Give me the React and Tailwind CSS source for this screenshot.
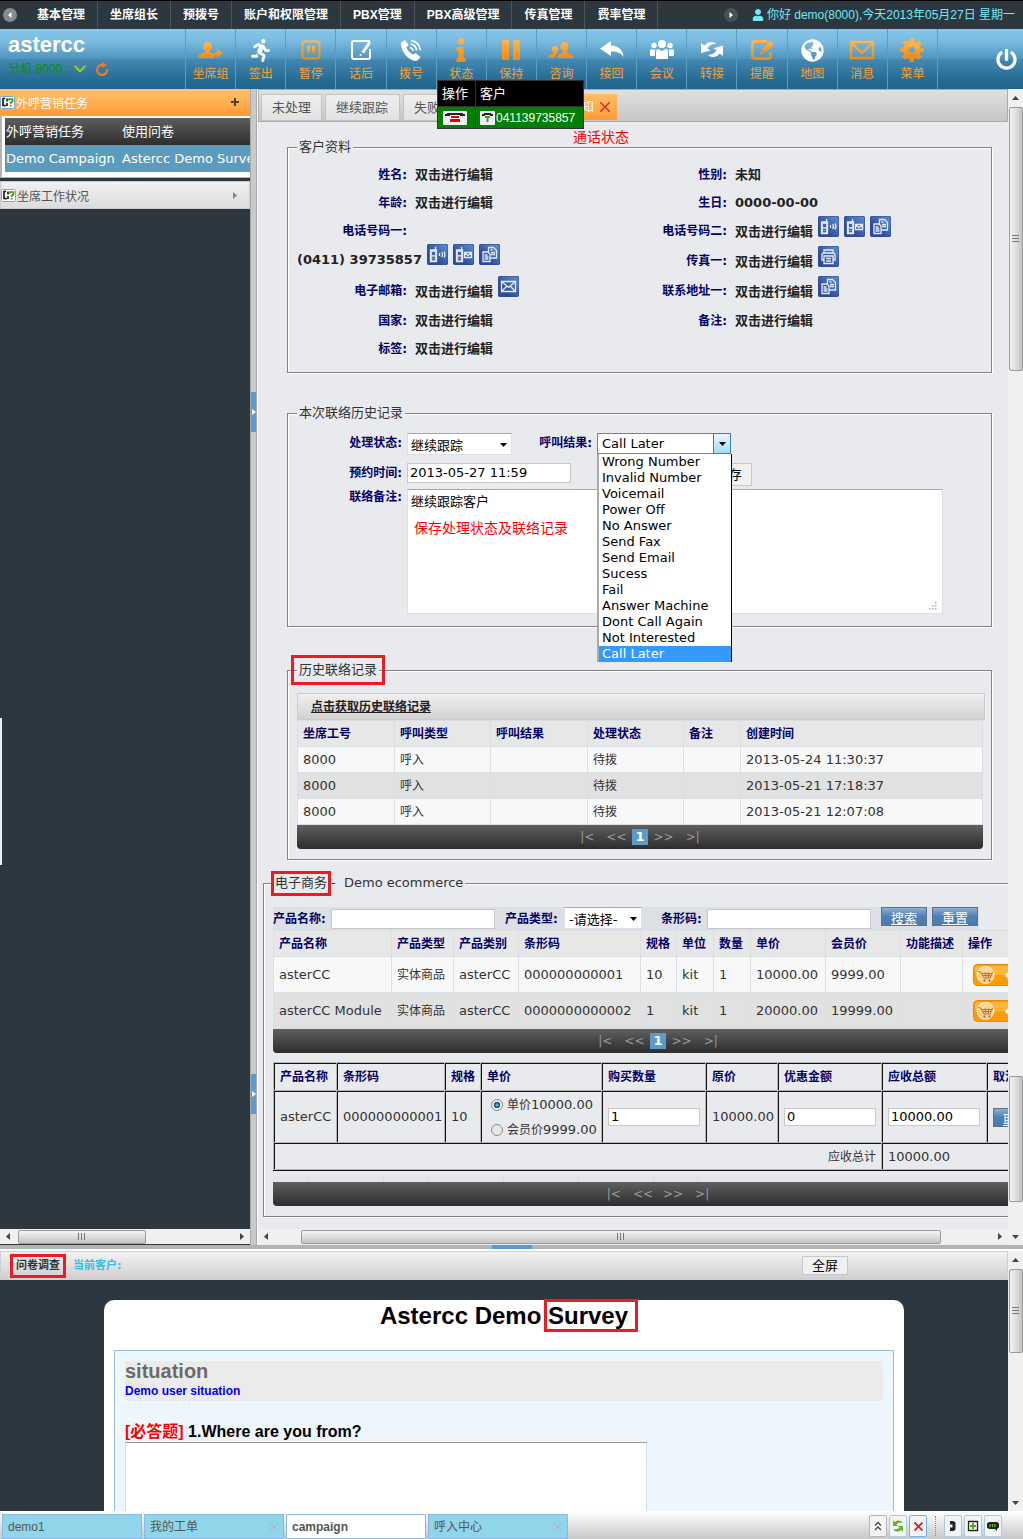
import { clsx } from 'clsx';
import { FaRunning, FaInfo, FaGlobeAmericas, FaUser, FaPowerOff, FaChevronDown } from 'react-icons/fa';

const NAV_ITEMS = ['基本管理', '坐席组长', '预拨号', '账户和权限管理', 'PBX管理', 'PBX高级管理', '传真管理', '费率管理'];

const ORANGE = 'fill-[url(#toolOrange)] stroke-none';

const AgentGroupIcon = () => (
  <svg width="26" height="22" viewBox="0 0 26 22" className={ORANGE}>
    <path d="M9.500 3c2.800 0 4.300 2 4.300 4.600 0 2-.9 3.800-2 4.600v1.300l3.200 1.200h2v-1.500h2V9.800l6 4.500-6 4.600v-2.700h-2V19H.5c0-3 .5-3.800 2.500-4.400l4.200-1.400V12c-1.200-.8-2-2.500-2-4.500C5.200 5 6.700 3 9.500 3z" />
    <path d="M16 12.800v-.8h1v.8zM16 16.500h3" fill="none" />
  </svg>
);

const PauseSquareIcon = () => (
  <svg width="20" height="20" viewBox="0 0 20 20">
    <rect x="1.500" y="1.500" width="17" height="17" rx="2" fill="none" stroke="url(#toolOrange)" strokeWidth="2" />
    <path d="M6 6h3v7.500H6zM11 6h3v7.500h-3z" className={ORANGE} />
  </svg>
);

const AfterCallIcon = () => (
  <svg width="20" height="20" viewBox="0 0 20 20" fill="none" stroke="#fff" strokeWidth="2">
    <path d="M19 9v8a2 2 0 0 1-2 2H3a2 2 0 0 1-2-2V3a2 2 0 0 1 2-2h16" />
    <path d="M17.500 1.500L20 3l-7 10.500-2.500-1.700zM9 13.500l2.200 1.400-2.700 1.300z" fill="#fff" stroke="none" />
  </svg>
);

const PhoneWavesIcon = () => (
  <svg width="24" height="24" viewBox="0 0 24 24" fill="none" stroke="#fff">
    <path
      d="M2 4.500L6 2l3.500 5-2.200 2.300c1.500 3.500 3.500 5.800 6.700 7.500l2.500-1.800 5 4-3 3.500c-2 1-6 0-10-3.500S1.500 9 2 4.500z"
      fill="#fff"
      stroke="none"
    />
    <path d="M11 9.500c1.500.3 2.800 1.500 3 3.300M11.500 6c3.500.5 5.800 3 6 6.500M12 2.500c5 .5 9 4.500 9.300 9.800" strokeWidth="1.600" />
  </svg>
);

const HoldIcon = () => (
  <svg width="20" height="20" viewBox="0 0 20 20" className={ORANGE}>
    <path d="M1 0h7v20H1zM12 0h7v20h-7z" />
  </svg>
);

const ConsultIcon = () => (
  <svg width="26" height="22" viewBox="0 0 26 22" className={ORANGE}>
    <path d="M16.500 3c2.700 0 4 2 4 4.600 0 2-.8 3.700-1.900 4.500v1.200l4.200 1.600c1.800.7 2.400 1.600 2.400 4.100H9.500c0-2.500.6-3.400 2.400-4.100l3-1.300v-1.500c-1.500-.9-2.400-2.500-2.400-4.500 0-2.600 1.400-4.600 4-4.600z" />
    <path d="M7 7c2 0 3.200 1.500 3.200 3.500 0 1.500-.6 2.700-1.400 3.300v.8c-1.300.8-1.800 2-1.800 4.400H.5c0-2 .4-2.800 1.800-3.300l2.900-1.100v-.8c-.9-.6-1.400-1.800-1.400-3.300C3.800 8.500 5 7 7 7z" />
  </svg>
);

const ReplyIcon = () => (
  <svg width="24" height="20" viewBox="0 0 24 20" fill="#fff">
    <path d="M0 8.500L11 1v4.500c7 0 12 4 12.500 11.500-2.500-4-6-5.500-12.500-5.500V16z" />
  </svg>
);

const ConferenceIcon = () => (
  <svg width="26" height="20" viewBox="0 0 26 20" fill="#fff">
    <circle cx="13" cy="4" r="4" />
    <circle cx="5" cy="5.500" r="2.700" />
    <circle cx="21" cy="5.500" r="2.700" />
    <path d="M7 19v-6.500C7 10 8 9 9.500 9l3.500 2 3.500-2c1.500 0 2.500 1 2.500 3.500V19zM6 16H1v-4.500C1 10 1.700 9 3 9l2 1 1.800-.7C6 10.500 6 12 6 13zM20 16h5v-4.500C25 10 24.300 9 23 9l-2 1-1.800-.7c.8 1.200.8 2.700.8 3.700z" />
  </svg>
);

const TransferIcon = () => (
  <svg width="24" height="20" viewBox="0 0 24 20" fill="#fff">
    <path d="M1 3l0 10 9.500-2.500-3-2C9 5.500 12 4 16 3.800 14 1 8 1 4.300 5.500z" />
    <path d="M23 16V5.500L13.500 8.300l3 2c-1.500 3-4.500 4.200-8.500 4.700 3 3 9 2.500 11.700-1.500z" />
  </svg>
);

const RemindIcon = () => (
  <svg width="25" height="22" viewBox="0 0 25 22">
    <path
      d="M16.500 2.500H4.500a2 2 0 0 0-2 2v13a2 2 0 0 0 2 2h14a2 2 0 0 0 2-2V13"
      fill="none"
      stroke="url(#toolOrange)"
      strokeWidth="2.800"
    />
    <path d="M20 1.500L24 5 15.500 13.500 12 10zM11 11l3.500 3.500L9.500 16z" className={ORANGE} />
  </svg>
);

const MessageIcon = () => (
  <svg width="26" height="20" viewBox="0 0 26 20" fill="none" stroke="url(#toolOrange)" strokeWidth="2.400">
    <path d="M2 2h22v16H2zM2.500 3L13 13 23.500 3" />
  </svg>
);

const MenuIcon = () => (
  <svg width="24" height="24" viewBox="0 0 24 24">
    <circle cx="12" cy="12" r="6" fill="none" stroke="url(#toolOrange)" strokeWidth="6" />
    <circle
      cx="12"
      cy="12"
      r="10"
      fill="none"
      stroke="url(#toolOrange)"
      strokeWidth="3.500"
      strokeDasharray="4.400 3.450"
      strokeDashoffset="2.200"
    />
  </svg>
);

const TOOLS = [
  { label: '坐席组', icon: <AgentGroupIcon /> },
  { label: '签出', icon: <FaRunning size={23} /> },
  { label: '暂停', icon: <PauseSquareIcon /> },
  { label: '话后', icon: <AfterCallIcon /> },
  { label: '拨号', icon: <PhoneWavesIcon /> },
  { label: '状态', icon: <FaInfo size={24} className={ORANGE} /> },
  { label: '保持', icon: <HoldIcon /> },
  { label: '咨询', icon: <ConsultIcon /> },
  { label: '接回', icon: <ReplyIcon /> },
  { label: '会议', icon: <ConferenceIcon /> },
  { label: '转接', icon: <TransferIcon /> },
  { label: '提醒', icon: <RemindIcon /> },
  { label: '地图', icon: <FaGlobeAmericas size={23} /> },
  { label: '消息', icon: <MessageIcon /> },
  { label: '菜单', icon: <MenuIcon /> },
];

const CALL_RESULTS = [
  'Wrong Number',
  'Invalid Number',
  'Voicemail',
  'Power Off',
  'No Answer',
  'Send Fax',
  'Send Email',
  'Sucess',
  'Fail',
  'Answer Machine',
  'Dont Call Again',
  'Not Interested',
  'Call Later',
];

function TopNav() {
  return (
    <nav className="flex h-[29px] shrink-0 items-stretch border-t border-black bg-[#2c3740] font-['Liberation_Sans','Noto_Sans_CJK_SC',sans-serif] text-[12px] leading-5 text-white">
      <div className="flex w-[25px] items-center pl-[3px]">
        <RoundArrow flip />
      </div>
      {NAV_ITEMS.map((item) => (
        <a key={item} href="#" className="flex items-center border-r border-[#4a555d] px-3 font-bold whitespace-nowrap">
          {item}
        </a>
      ))}
      <div className="ml-auto flex items-center pr-2">
        <RoundArrow />
        <span className="ml-[14px] flex items-center gap-[3px] whitespace-nowrap text-[#6feaf5]">
          <FaUser size={12} />
          你好 demo(8000),今天2013年05月27日 星期一
        </span>
      </div>
    </nav>
  );
}

function RoundArrow({ flip }) {
  return (
    <button type="button" aria-label={flip ? '向左' : '向右'}>
      <svg width="14" height="14" viewBox="0 0 14 14" className={clsx(flip && 'rotate-180')}>
        <circle cx="7" cy="7" r="7" fill={flip ? '#858b8f' : '#475159'} />
        <path d="M5.500 4v6l3.500-3z" fill="#fff" />
      </svg>
    </button>
  );
}

function Header() {
  return (
    <header className="relative flex h-[60px] shrink-0 bg-[linear-gradient(#85c7ec_0%,#7bbbe0_20%,#4e94bd_50%,#4488b1_51%,#22678f_90%,#20648c_100%)]">
      <svg width="0" height="0" className="absolute">
        <linearGradient id="toolOrange" x1="0" y1="0" x2="0" y2="1">
          <stop offset="0" stopColor="#ffb551" />
          <stop offset="1" stopColor="#f68a0a" />
        </linearGradient>
      </svg>
      <div className="w-[185px] pt-1 pl-2 font-['Liberation_Sans','Noto_Sans_CJK_SC',sans-serif]">
        <h1 className="text-[22px] leading-6 font-bold text-white">astercc</h1>
        <div className="flex items-center text-[12px] leading-6 text-[#0a8f0a]">
          分机 8000 :
          <FaChevronDown size={14} className="ml-1 text-[#9acb17]" />
          <button type="button" aria-label="刷新" className="ml-2">
            <svg width="14" height="14" viewBox="0 0 14 14" fill="none" stroke="#ef7d16" strokeWidth="2.200">
              <path d="M8 3a5 5 0 1 0 4 4" />
              <path d="M7 0l5 3-5 3z" fill="#ef7d16" stroke="none" />
            </svg>
          </button>
        </div>
      </div>
      <div className="grid w-[753px] grid-cols-15 border-l border-[#5c9fc6]">
        {TOOLS.map((tool) => (
          <button
            key={tool.label}
            type="button"
            className="flex flex-col items-center border-r border-[#5c9fc6] pt-2 text-white"
          >
            <span className="flex h-[26px] items-center justify-center">{tool.icon}</span>
            <span className="text-[12px] leading-[22px] whitespace-nowrap text-[#f7a032]">{tool.label}</span>
          </button>
        ))}
      </div>
      <button type="button" aria-label="退出" className="ml-auto pr-[6px] text-white">
        <FaPowerOff size={21} />
      </button>
      <CallPopup />
    </header>
  );
}

function CallPopup() {
  return (
    <table className="absolute top-[51px] left-[437px] z-20 w-[147px] border-collapse text-[13px] leading-5 text-white">
      <thead>
        <tr className="h-[26px] bg-black text-left">
          <th className="w-[38px] border border-[#333] pl-1 font-normal whitespace-nowrap">操作</th>
          <th className="border border-[#333] pl-1 font-normal">客户</th>
        </tr>
      </thead>
      <tbody>
        <tr className="h-[22px] bg-[#008000]">
          <td className="border border-[#333] pl-[5px]">
            <button type="button" aria-label="挂断" className="block">
              <svg width="24" height="14" viewBox="0 0 24 14">
                <rect width="24" height="14" rx="1" fill="#f0f0f6" />
                <path d="M4 2h16v1h2v2h-5V4H7v1H2V3h2z" fill="#222" />
                <path d="M8 5h8v2h1v4H7V7h1z" fill="#e00" />
                <path d="M7 7.500h10" stroke="#fff" />
              </svg>
            </button>
          </td>
          <td className="border border-[#333] pl-1">
            <span className="flex items-center gap-px font-['Liberation_Sans',sans-serif] text-[12px]">
              <svg width="15" height="14" viewBox="0 0 15 14">
                <rect width="15" height="14" rx="1" fill="#f0f0f6" />
                <path d="M4 2h7v1h2v2h-3V4H5v1H2V3h2z" fill="#222" />
                <path d="M5 5h5v2H8.500v4h-2V7H5z" fill="#4a9c1c" />
              </svg>
              041139735857
            </span>
          </td>
        </tr>
      </tbody>
    </table>
  );
}

function Arrow({ dir }) {
  const paths = { up: 'M1 6l3.500-4L8 6z', down: 'M1 3l3.500 4L8 3z', left: 'M6 1L2 4.500 6 8z', right: 'M3 1l4 3.500L3 8z' };
  return (
    <svg width="9" height="9" viewBox="0 0 9 9" fill="#444">
      <path d={paths[dir]} />
    </svg>
  );
}

function VScroll({ thumbs }) {
  return (
    <div className="flex w-[15px] shrink-0 flex-col items-center bg-[#f0f0f0]">
      <span className="flex h-[18px] items-center">
        <Arrow dir="up" />
      </span>
      {thumbs.map((t) => (
        <div
          key={t.className}
          className={clsx(
            'flex w-[14px] items-center justify-center rounded-xs border border-[#9a9a9a] bg-linear-to-r from-[#f4f4f4] via-[#dedee0] to-[#c2c2c6]',
            t.className,
          )}
        >
          {t.grip && <span className="h-[9px] w-[7px] bg-[repeating-linear-gradient(#777_0_1px,transparent_1px_3px)]" />}
        </div>
      ))}
      <span className="mt-auto flex h-[17px] items-center">
        <Arrow dir="down" />
      </span>
    </div>
  );
}

function HScroll({ thumb, className }) {
  return (
    <div className={clsx('flex h-[15px] shrink-0 items-center bg-[#f0f0f0]', className)}>
      <span className="w-[18px] pl-1">
        <Arrow dir="left" />
      </span>
      <div
        className={clsx(
          'flex h-[14px] items-center justify-center rounded-xs border border-[#9a9a9a] bg-linear-to-b from-[#f4f4f4] via-[#dcdcdc] to-[#c4c4c4]',
          thumb,
        )}
      >
        <span className="h-[7px] w-[9px] bg-[repeating-linear-gradient(90deg,#777_0_1px,transparent_1px_3px)]" />
      </div>
      <span className="mr-1 ml-auto">
        <Arrow dir="right" />
      </span>
    </div>
  );
}

function PanelIcon() {
  return (
    <svg width="15" height="13" viewBox="0 0 15 13" className="shrink-0">
      <rect x="0.500" y="0.500" width="14" height="12" rx="1" fill="#fff" stroke="#7ba7d6" />
      <path d="M5 2.500H3v7h2v1M7 2.500v3M7 7v3" fill="none" stroke="#111" strokeWidth="1.600" />
      <path d="M9 4.500V3h3.500v2.500l-1.800 1.300V8M10.700 9v1.500" fill="none" stroke="#3a9a12" strokeWidth="1.700" />
    </svg>
  );
}

function Sidebar() {
  return (
    <aside className="flex w-[250px] shrink-0 flex-col overflow-hidden bg-[#2c3740]">
      <div className="flex h-[26px] shrink-0 items-center bg-linear-to-b from-[#ffc26c] to-[#ff9c33] text-[12px] text-white">
        <PanelIcon />
        <span className="pt-1 pl-px">外呼营销任务</span>
        <button type="button" aria-label="展开" className="mr-[10px] ml-auto text-[#444]">
          <svg width="10" height="10" viewBox="0 0 10 10" stroke="currentColor" strokeWidth="2">
            <path d="M5 1v8M1 5h8" />
          </svg>
        </button>
      </div>
      <div className="border-y border-l-2 border-[#b4b4b4] bg-white pt-[2px] pb-[5px] pl-[3px]">
        <table className="w-[300px] table-fixed text-[13px] leading-5">
          <thead>
            <tr className="h-[27px] bg-linear-to-b from-[#5e5e5e] to-[#2e2e2e] text-left text-white">
              <th className="w-[116px] pl-px font-normal">外呼营销任务</th>
              <th className="pl-px font-normal">使用问卷</th>
            </tr>
          </thead>
          <tbody>
            <tr className="h-[27px] bg-[#5b9bbd] text-white">
              <td className="pl-px whitespace-nowrap">Demo Campaign</td>
              <td className="pl-px whitespace-nowrap">Astercc Demo Survey</td>
            </tr>
          </tbody>
        </table>
      </div>
      <div className="mt-[3px] flex h-7 shrink-0 items-center border border-[#ccc] bg-linear-to-b from-[#f0f0f0] to-[#dcdcdc] text-[12px] text-[#555]">
        <PanelIcon />
        <span className="pt-1 pl-px">坐席工作状况</span>
        <span className="mr-[10px] ml-auto opacity-60">
          <Arrow dir="right" />
        </span>
      </div>
      <div className="mt-[509px] h-[147px] w-[2px] bg-[#eceef0]" />
      <HScroll thumb="w-[128px]" className="mt-auto mb-px" />
    </aside>
  );
}

function Splitter() {
  return (
    <div className="flex w-[7px] shrink-0 flex-col items-center border-x border-[#a8a8a8] bg-[#c9c9c9]">
      {['mt-[303px]', 'mt-[642px]'].map((m) => (
        <button
          key={m}
          type="button"
          aria-label="收起"
          className={clsx('flex h-10 w-[5px] shrink-0 items-center justify-center bg-[#5b9bd5]', m)}
        >
          <svg width="4" height="6" viewBox="0 0 4 6" fill="#fff">
            <path d="M0 0l4 3-4 3z" />
          </svg>
        </button>
      ))}
    </div>
  );
}

const BOX = 'min-w-0 border border-[#848484] pl-[9px] shadow-[inset_1px_1px_0_#fff,1px_1px_0_#fff]';
const LEGEND = 'bg-[#e9eaee] px-[2px] text-[13px] leading-5 text-[#333]';
const LABEL = 'text-[12px] font-bold text-[#000066] whitespace-nowrap';
const INPUT = 'border border-[#c8c8c8] bg-white px-[2px] text-[13px] text-black';

function ActionIcon({ kind }) {
  const names = { call: '拨打', sms: '短信', copy: '复制', fax: '传真', mail: '邮件' };
  const phone = (
    <>
      <path d="M3.500 6h6v11.500h-6z" fill="#c9d5ec" />
      <path d="M8.500 3v3" />
      <path d="M5 8h3v3H5z" fill="#3c5eae" stroke="none" />
      <path d="M5 13.500h3M5 15.500h3" stroke="#3c5eae" />
    </>
  );
  return (
    <button type="button" aria-label={names[kind]} className="shrink-0 self-start">
      <svg width="21" height="21" viewBox="0 0 21 21" fill="none" stroke="#e6edfa" strokeWidth="1.300">
        <linearGradient id={`act-${kind}`} x1="0" y1="1" x2="1" y2="0">
          <stop offset="0.300" stopColor="#2f4a9c" />
          <stop offset="1" stopColor="#5c94cf" />
        </linearGradient>
        <rect width="21" height="21" rx="3" fill={`url(#act-${kind})`} stroke="#344a94" strokeWidth="1" />
        {kind === 'call' && (
          <>
            {phone}
            <path d="M12.500 9v3M14.700 8c1 1.500 1 3.500 0 5M17 7.500c1.200 2 1.200 4 0 6" />
          </>
        )}
        {kind === 'sms' && (
          <>
            {phone}
            <path d="M11.500 8.500h7v5h-7zM11.500 9l3.500 2.500L18.500 9" />
          </>
        )}
        {kind === 'copy' && (
          <path d="M4 8h5l2 2v7.500H4zM5.500 11h3M5.500 13h4M5.500 15h4M9.500 8V3.500h5l3 3V14H11M11.500 6h2M12 8.500h4M12 10.500h4" />
        )}
        {kind === 'fax' && (
          <path d="M6 7V4h9v3M6 14H4V9c0-1 .5-2 2-2h9c1.500 0 2 1 2 2v5h-2M6 10h9v7.500H6zM8 12.500h5M8 15h5" />
        )}
        {kind === 'mail' && <path d="M3.500 5.500h14v10h-14zM3.500 5.500l7 6 7-6M3.500 15.500l5-5M17.500 15.500l-5-5" />}
      </svg>
    </button>
  );
}

function InfoRow({ label, value = '双击进行编辑', icons = [], tall, wide }) {
  return (
    <div className={clsx('flex text-[13px] leading-[30px]', tall ? 'h-[30px]' : 'h-7')}>
      {!wide && <dt className={clsx(LABEL, 'w-[110px] shrink-0 text-right')}>{label}</dt>}
      <dd className={clsx('flex gap-[5px] font-bold whitespace-nowrap text-[#222]', !wide && 'pl-2', tall && 'leading-8')}>
        {value}
        {icons.map((kind) => (
          <ActionIcon key={kind} kind={kind} />
        ))}
      </dd>
    </div>
  );
}

function CustomerInfo() {
  return (
    <fieldset className={clsx(BOX, 'mt-[15px] mr-4 ml-[29px] pt-[3px] pb-[10px]')}>
      <legend className={LEGEND}>客户资料</legend>
      <div className="flex">
        <dl className="w-[320px]">
          <InfoRow label="姓名:" />
          <InfoRow label="年龄:" />
          <InfoRow label="电话号码一:" value="" />
          <InfoRow wide value="(0411) 39735857" icons={['call', 'sms', 'copy']} tall />
          <div className="h-[2px]" />
          <InfoRow label="电子邮箱:" icons={['mail']} tall />
          <InfoRow label="国家:" />
          <InfoRow label="标签:" />
        </dl>
        <dl>
          <InfoRow label="性别:" value="未知" />
          <InfoRow label="生日:" value="0000-00-00" />
          <InfoRow label="电话号码二:" icons={['call', 'sms', 'copy']} tall />
          <InfoRow label="传真一:" icons={['fax']} tall />
          <InfoRow label="联系地址一:" icons={['copy']} tall />
          <InfoRow label="备注:" />
        </dl>
      </div>
    </fieldset>
  );
}

function Caret({ className }) {
  return (
    <svg width="7" height="4" viewBox="0 0 7 4" className={clsx('pointer-events-none absolute', className)}>
      <path d="M0 0h7L3.500 4z" fill="#000" />
    </svg>
  );
}

function ContactForm() {
  return (
    <fieldset className={clsx(BOX, 'mt-[30px] mr-4 ml-[29px] pt-[10px] pb-3 text-[13px] leading-5')}>
      <legend className={LEGEND}>本次联络历史记录</legend>
      <div className="flex h-[30px] items-start">
        <label htmlFor="status" className={clsx(LABEL, 'w-[110px] pr-[5px] text-right')}>
          处理状态:
        </label>
        <div className="relative">
          <select
            id="status"
            defaultValue="a"
            className="h-[22px] w-[105px] appearance-none border border-[#dde0e6] border-t-[#aaa] bg-white pt-[2px] pl-[3px] text-black"
          >
            <option value="a">继续跟踪</option>
          </select>
          <Caret className="top-[10px] right-[5px]" />
        </div>
        <label htmlFor="result" className={clsx(LABEL, 'w-[85px] pr-[5px] text-right')}>
          呼叫结果:
        </label>
        <div className="relative z-10">
          <select
            id="result"
            defaultValue="Call Later"
            className="h-[21px] w-[134px] appearance-none border border-[#4f8fc0] bg-white pl-1 text-black"
          >
            {CALL_RESULTS.map((r) => (
              <option key={r}>{r}</option>
            ))}
          </select>
          <span className="pointer-events-none absolute top-0 right-0 h-[21px] w-[18px] border border-[#3c7fb1] bg-linear-to-b from-[#eaf6fd] to-[#a7d9f5]">
            <Caret className="top-2 right-1" />
          </span>
          <ul className="absolute top-[21px] left-0 w-[135px] border-r border-l-2 border-r-black border-l-[#aaa] bg-white leading-4 text-black">
            {CALL_RESULTS.map((r) => (
              <li key={r} className={clsx('pl-[3px]', r === 'Call Later' && 'bg-[#3399ff] text-white')}>
                {r}
              </li>
            ))}
          </ul>
        </div>
      </div>
      <div className="flex h-[26px] items-start">
        <label htmlFor="appoint" className={clsx(LABEL, 'w-[110px] pr-[5px] text-right')}>
          预约时间:
        </label>
        <input id="appoint" defaultValue="2013-05-27 11:59" className={clsx(INPUT, 'h-5 w-[164px]')} />
        <button type="button" className="ml-[130px] h-[23px] w-[51px] border border-[#c8c8c8] bg-[#f0f0f0] pl-1 text-black">
          保存
        </button>
      </div>
      <div className="flex items-start">
        <label htmlFor="note" className={clsx(LABEL, 'w-[110px] pr-[5px] leading-4 text-right')}>
          联络备注:
        </label>
        <div className="relative">
          <textarea
            id="note"
            defaultValue="继续跟踪客户"
            className="block h-[125px] w-[536px] resize-none border border-[#dde0e6] border-t-[#aaa] bg-white px-[3px] pt-[2px] text-black"
          />
          <span className="absolute top-[29px] left-[7px] text-[14px] whitespace-nowrap text-[#ff0000]">
            保存处理状态及联络记录
          </span>
          <svg width="8" height="8" viewBox="0 0 8 8" fill="#aaa" className="absolute right-[6px] bottom-1">
            <path d="M6 0h1.500v1.500H6zM3 3h1.500v1.500H3zM6 3h1.500v1.500H6zM0 6h1.500v1.500H0zM3 6h1.500v1.500H3zM6 6h1.500v1.500H6z" />
          </svg>
        </div>
      </div>
    </fieldset>
  );
}

function Pager({ current, className }) {
  return (
    <div
      className={clsx(
        'flex h-6 items-center justify-center bg-linear-to-b from-[#606060] to-[#2d2d2d] text-[12px] leading-4 text-[#999]',
        className,
      )}
    >
      <a href="#">|&lt;</a>
      <a href="#" className="ml-3">
        &lt;&lt;
      </a>
      {current && <span className="mx-[6px] bg-[#5b9bc8] px-[3px] text-[13px] font-bold text-white">{current}</span>}
      <a href="#" className={clsx(!current && 'ml-[10px]')}>
        &gt;&gt;
      </a>
      <a href="#" className="ml-3">
        &gt;|
      </a>
    </div>
  );
}

const CELL = 'border border-[#dadfe3] pl-[5px] text-left whitespace-nowrap overflow-hidden';

function DataTable({ columns, rows, rowClass }) {
  return (
    <table className="w-full table-fixed border-collapse leading-5">
      <colgroup>
        {columns.map((c) => (
          <col key={c.name} className={c.width} />
        ))}
      </colgroup>
      <thead>
        <tr className="h-[26px] bg-[#e7e7e7]">
          {columns.map((c) => (
            <th key={c.name} className={clsx(CELL, LABEL)}>
              {c.name}
            </th>
          ))}
        </tr>
      </thead>
      <tbody className="text-[13px] text-[#333]">
        {rows.map((row, i) => (
          <tr key={i} className={clsx(rowClass, i % 2 ? 'bg-[#e1e1e1]' : 'bg-[#f8f8f8]')}>
            {row.map((v, j) => (
              <td key={j} className={clsx(CELL, /^[^\x00-\x7f]+$/.test(v) && 'text-[12px]')}>
                {v}
              </td>
            ))}
          </tr>
        ))}
      </tbody>
    </table>
  );
}

function ContactHistory() {
  return (
    <fieldset className={clsx(BOX, 'mt-[33px] mr-4 ml-[29px] pt-[13px] pr-[6px] pb-[10px]')}>
      <legend className={clsx(LEGEND, 'relative')}>
        历史联络记录
        <span className="absolute -inset-x-[6px] -inset-y-[5px] border-3 border-[#ed1c24]" />
      </legend>
      <div className="flex h-[27px] items-center border border-[#ccc] bg-linear-to-b from-[#f0f0f0] to-[#d2d2d2] pl-[13px]">
        <a href="#" className="text-[12px] leading-5 font-bold text-[#222] underline">
          点击获取历史联络记录
        </a>
      </div>
      <div className="mr-[2px]">
        <DataTable
          rowClass="h-[26px]"
          columns={[
            { name: '坐席工号', width: 'w-[97px]' },
            { name: '呼叫类型', width: 'w-[96px]' },
            { name: '呼叫结果', width: 'w-[97px]' },
            { name: '处理状态', width: 'w-[96px]' },
            { name: '备注', width: 'w-[57px]' },
            { name: '创建时间' },
          ]}
          rows={[
            ['8000', '呼入', '', '待拨', '', '2013-05-24 11:30:37'],
            ['8000', '呼入', '', '待拨', '', '2013-05-21 17:18:37'],
            ['8000', '呼入', '', '待拨', '', '2013-05-21 12:07:08'],
          ]}
        />
        <Pager current="1" className="rounded-b" />
      </div>
    </fieldset>
  );
}

function CartButton() {
  return (
    <button type="button" aria-label="加入购物车" className="ml-[5px] block">
      <svg width="60" height="22" viewBox="0 0 60 22">
        <rect x="0.500" y="0.500" width="59" height="21" rx="4" fill="#ff9a08" stroke="#e8890c" />
        <rect x="2" y="2" width="56" height="9" rx="3" fill="#ffb637" />
        <circle cx="12.500" cy="11" r="8.500" fill="#fbd58e" stroke="#fff" strokeWidth="0.800" />
        <path
          d="M5 7.500l2.500.5 3.500 6h6l3-6.500M9 9.500h10M10 11.500h8M12 8.500l1 5M15.500 8.500v5"
          fill="none"
          stroke="#b0692a"
          strokeWidth="0.900"
        />
        <path d="M10.500 15.500h2v2h-2zM15.500 15.500h2v2h-2z" fill="#b0692a" />
        <path d="M32.500 11.500h7M36 8v7" stroke="#fff" strokeWidth="3" />
      </svg>
    </button>
  );
}

const BLUE_BTN =
  'h-[19px] w-[46px] border border-[#5c7387] bg-linear-to-b from-[#8db0d2] via-[#4f7fb3] to-[#4b7bb0] pt-[3px] text-[13px] leading-4 text-white underline';
const GRID = 'border-t border-l border-[#111] bg-[#e9eaee] pl-[5px] text-left whitespace-nowrap';

function OrderTable() {
  const heads = [
    ['产品名称', 'w-[62px]'],
    ['条形码', 'w-[107px]'],
    ['规格', 'w-[35px]'],
    ['单价', 'w-[120px]'],
    ['购买数量', 'w-[103px]'],
    ['原价', 'w-[71px]'],
    ['优惠金额', 'w-[103px]'],
    ['应收总额', 'w-[104px]'],
    ['取消', ''],
  ];
  return (
    <table className="mt-[9px] w-full table-fixed border-separate border-spacing-px border-b border-[#111] bg-[#b4b4b4] text-[13px] leading-5 text-[#333]">
      <thead>
        <tr className="h-[27px]">
          {heads.map(([name, width]) => (
            <th key={name} className={clsx(GRID, LABEL, width)}>
              {name}
            </th>
          ))}
        </tr>
      </thead>
      <tbody>
        <tr className="h-[51px]">
          <td className={GRID}>asterCC</td>
          <td className={GRID}>000000000001</td>
          <td className={GRID}>10</td>
          <td className={GRID}>
            <PriceRadio label="单价" price="10000.00" checked />
            <PriceRadio label="会员价" price="9999.00" />
          </td>
          <td className={GRID}>
            <input aria-label="购买数量" defaultValue="1" className={clsx(INPUT, 'h-[18px] w-[92px]')} />
          </td>
          <td className={GRID}>10000.00</td>
          <td className={GRID}>
            <input aria-label="优惠金额" defaultValue="0" className={clsx(INPUT, 'h-[18px] w-[92px]')} />
          </td>
          <td className={GRID}>
            <input aria-label="应收总额" defaultValue="10000.00" className={clsx(INPUT, 'h-[18px] w-[92px]')} />
          </td>
          <td className={GRID}>
            <button type="button" className={clsx(BLUE_BTN, 'block')}>
              取消
            </button>
          </td>
        </tr>
        <tr className="h-[26px]">
          <td colSpan={7} className="border-t border-l border-[#111] bg-[#e9eaee] pr-[5px] text-right text-[12px]">
            应收总计
          </td>
          <td colSpan={2} className={GRID}>
            10000.00
          </td>
        </tr>
      </tbody>
    </table>
  );
}

function PriceRadio({ label, price, checked }) {
  return (
    <label className="flex h-[25px] items-center pl-1">
      <input
        type="radio"
        name="price"
        defaultChecked={checked}
        className="mr-1 size-3 shrink-0 appearance-none rounded-full border border-[#8a8a8a] bg-[#e6e6e6] checked:bg-[radial-gradient(#4cb4dc_0_10%,#123f60_40%,#eee_50%)]"
      />
      <span className="text-[12px]">{label}</span>
      {price}
    </label>
  );
}

function Ecommerce() {
  return (
    <fieldset className={clsx(BOX, 'mt-[13px] ml-[5px] w-[790px] pt-[14px] pr-[9px] pb-[10px]')}>
      <legend className={LEGEND}>
        <span className="relative inline-block">
          电子商务
          <span className="absolute -inset-x-1 -top-[2px] -bottom-[3px] border-3 border-[#ed1c24]" />
        </span>
        <span className="pl-1">-&nbsp; Demo ecommerce</span>
      </legend>
      <div className="flex h-[23px] w-[706px] items-start bg-[#dce0e4]">
        <label htmlFor="pname" className={clsx(LABEL, 'w-[58px] leading-6')}>
          产品名称:
        </label>
        <input id="pname" className={clsx(INPUT, 'mt-[2px] h-5 w-[164px]')} />
        <label htmlFor="ptype" className={clsx(LABEL, 'w-[69px] pl-[10px] leading-6')}>
          产品类型:
        </label>
        <div className="relative">
          <select
            id="ptype"
            defaultValue="a"
            className="h-[22px] w-[78px] appearance-none border border-[#dde0e6] border-t-[#aaa] bg-white pt-[2px] pl-1 text-[13px] text-black"
          >
            <option value="a">-请选择-</option>
          </select>
          <Caret className="top-[10px] right-[5px]" />
        </div>
        <label htmlFor="barcode" className={clsx(LABEL, 'w-[65px] pl-[19px] leading-6')}>
          条形码:
        </label>
        <input id="barcode" className={clsx(INPUT, 'mt-[2px] h-5 w-[164px]')} />
        <button type="button" className={clsx(BLUE_BTN, 'ml-[10px]')}>
          搜索
        </button>
        <button type="button" className={clsx(BLUE_BTN, 'ml-[5px]')}>
          重置
        </button>
      </div>
      <DataTable
        rowClass="h-9"
        columns={[
          { name: '产品名称', width: 'w-[118px]' },
          { name: '产品类型', width: 'w-[62px]' },
          { name: '产品类别', width: 'w-[65px]' },
          { name: '条形码', width: 'w-[122px]' },
          { name: '规格', width: 'w-[36px]' },
          { name: '单位', width: 'w-[37px]' },
          { name: '数量', width: 'w-[37px]' },
          { name: '单价', width: 'w-[75px]' },
          { name: '会员价', width: 'w-[75px]' },
          { name: '功能描述', width: 'w-[62px]' },
          { name: '操作' },
        ]}
        rows={[
          ['asterCC', '实体商品', 'asterCC', '000000000001', '10', 'kit', '1', '10000.00', '9999.00', '', <CartButton />],
          ['asterCC Module', '实体商品', 'asterCC', '0000000000002', '1', 'kit', '1', '20000.00', '19999.00', '', <CartButton />],
        ]}
      />
      <Pager current="1" className="rounded-b" />
      <OrderTable />
      <div className="mt-[5px] flex h-[6px] bg-[#e3e5e8]">
        {['w-9', 'w-[75px]', 'w-11', 'w-[76px]', 'w-[75px]', 'w-[75px]', 'w-[44px]'].map((w, i) => (
          <span key={i} className={clsx('border-r border-[#d5dade]', w)} />
        ))}
      </div>
      <Pager className="rounded-b" />
    </fieldset>
  );
}

function WorkPane() {
  const tab = 'flex h-[27px] items-center border border-[#c4c4c4] bg-linear-to-b from-[#eee] to-[#e2e2e2] px-[10px] text-[#555]';
  return (
    <section className="flex min-w-0 flex-1 bg-[#e9eaee] text-[13px] leading-5">
      <div className="flex min-w-0 flex-1 flex-col overflow-hidden border-l border-white">
        <div className="relative flex h-[33px] shrink-0 items-end gap-[3px] border border-[#aaa] bg-linear-to-b from-[#e0e0e0] to-[#c6c6c6] pl-[2px]">
          <button type="button" className={clsx(tab, 'w-[61px]')}>
            未处理
          </button>
          <button type="button" className={clsx(tab, 'w-[75px]')}>
            继续跟踪
          </button>
          <button type="button" className={clsx(tab, 'w-[158px]')}>
            失败
          </button>
          <button
            type="button"
            className="mb-px flex h-[26px] w-[53px] items-center bg-linear-to-b from-[#ffbe66] to-[#ff9b33] pl-1 text-white"
          >
            未知
            <svg width="10" height="10" viewBox="0 0 10 10" stroke="#c0392b" strokeWidth="1.500" className="ml-[6px]">
              <path d="M0 0l10 10M10 0L0 10" />
            </svg>
          </button>
          <span className="absolute top-[37px] left-[314px] text-[14px] text-[#ff0000]">通话状态</span>
        </div>
        <div className="min-h-0 flex-1 overflow-hidden">
          <CustomerInfo />
          <ContactForm />
          <ContactHistory />
          <Ecommerce />
        </div>
        <HScroll thumb="ml-[25px] w-[640px]" className="mb-px" />
      </div>
      <VScroll thumbs={[{ className: 'h-[264px]', grip: true }, { className: 'mt-[705px] h-[126px]' }]} />
    </section>
  );
}

function SurveyPane() {
  return (
    <section className="flex h-[260px] shrink-0 overflow-hidden">
      <div className="flex min-w-0 flex-1 flex-col overflow-hidden bg-[#2c3740]">
        <div className="flex h-[29px] shrink-0 items-center border border-[#d0d0d0] bg-linear-to-b from-[#f2f2f2] to-[#cfcfcf] pl-[9px] text-[11px] leading-4 font-bold">
          <span className="border-3 border-[#ed1c24] px-[3px] py-px text-[#333]">问卷调查</span>
          <span className="pl-[7px] text-[#2ec0e6]">当前客户:</span>
          <button
            type="button"
            className="mr-[159px] ml-auto h-[19px] w-[46px] border border-[#c8c8c8] bg-[#f0f0f0] text-[13px] leading-4 font-normal text-black"
          >
            全屏
          </button>
        </div>
        <div className="mx-auto mt-5 w-[800px] rounded-t-[10px] bg-white px-[10px] font-['Liberation_Sans','Noto_Sans_CJK_SC',sans-serif] font-bold">
          <h2 className="text-center text-[24px] leading-8 text-black">
            Astercc Demo{' '}
            <span className="relative">
              Survey
              <span className="absolute top-[-3px] -right-[10px] -bottom-[3px] -left-1 border-3 border-[#ed1c24]" />
            </span>
          </h2>
          <div className="mt-[18px] h-[200px] border border-[#96bfdc] bg-[#edf5fd] p-[10px]">
            <div className="h-10 bg-[#ebebeb]">
              <h3 className="text-[20px] leading-5 text-[#6b6b6b]">situation</h3>
              <p className="text-[12px] leading-5 text-[#0000ff]">Demo user situation</p>
            </div>
            <label htmlFor="q1" className="mt-5 block text-[16px] leading-[21px] text-black">
              <span className="text-[#ff0000]">[必答题]</span> 1.Where are you from?
            </label>
            <textarea id="q1" className="block h-[100px] w-[522px] resize-none border border-[#d5dce4] border-t-[#999] bg-white" />
          </div>
        </div>
      </div>
      <VScroll thumbs={[{ className: 'h-[84px]', grip: true }]} />
    </section>
  );
}

function TaskBar() {
  const tabs = [
    { label: 'demo1' },
    { label: '我的工单', close: true },
    { label: 'campaign', active: true },
    { label: '呼入中心', close: true },
  ];
  const tool = 'flex h-[22px] w-[18px] items-center justify-center rounded-xs border bg-[#f2f4f6]';
  return (
    <footer className="flex h-7 shrink-0 items-center bg-linear-to-b from-white to-[#c8c8c8] pt-[2px] font-['Liberation_Sans','Noto_Sans_CJK_SC',sans-serif] text-[12px]">
      <div className="flex gap-[2px] pl-[2px]">
        {tabs.map((t) => (
          <button
            key={t.label}
            type="button"
            className={clsx(
              'flex h-[25px] w-[140px] items-center border border-[#8fb8e4] px-[5px] pt-[2px] text-[#555]',
              t.active ? 'bg-white font-bold' : 'bg-[#90d6eb]',
            )}
          >
            {t.label}
            {t.close && (
              <svg width="8" height="8" viewBox="0 0 8 8" stroke="#b9a9b9" className="ml-auto">
                <path d="M0 0l8 8M8 0L0 8" />
              </svg>
            )}
          </button>
        ))}
      </div>
      <div className="mr-[21px] ml-auto flex items-center gap-[2px]">
        <button type="button" aria-label="展开" className={clsx(tool, 'border-[#b5b5b5]')}>
          <svg width="8" height="10" viewBox="0 0 8 10" fill="none" stroke="#444" strokeWidth="1.300">
            <path d="M1 4.500l3-3 3 3M1 9l3-3 3 3" />
          </svg>
        </button>
        <button type="button" aria-label="刷新" className={clsx(tool, 'border-[#a8cbe8]')}>
          <svg width="12" height="14" viewBox="0 0 12 14" fill="#67b52c">
            <path d="M1 1v6h5L4.500 5.500C5.500 4 8 3.500 11 4 9.500 1 5 .5 2.800 3zM11 13V7H6l1.500 1.500C6.500 10 4 10.500 1 10c1.500 3 6 3.500 8.200 1z" />
          </svg>
        </button>
        <button type="button" aria-label="关闭" className={clsx(tool, 'border-[#6cb2ee]')}>
          <svg width="9" height="9" viewBox="0 0 9 9" stroke="#e01b1b" strokeWidth="1.800">
            <path d="M0.500 0.500l8 8M8.500 0.500l-8 8" />
          </svg>
        </button>
        <span className="mx-[6px] h-5 border-l border-dotted border-[#888]" />
        <button type="button" aria-label="电话" className={clsx(tool, 'border-[#a8cbe8]')}>
          <svg width="6" height="10" viewBox="0 0 6 10" fill="#222">
            <path d="M0 0h3.500L5.500 1.500v7L3.500 10H0V6.500h2.500v-3H0z" />
          </svg>
        </button>
        <button type="button" aria-label="新增" className={clsx(tool, 'border-[#a8cbe8]')}>
          <svg width="12" height="12" viewBox="0 0 12 12" fill="none">
            <path d="M1.500 1.500h9v9h-9z" stroke="#222" strokeWidth="1.300" />
            <path d="M6 3v6M3 6h6" stroke="#4da51a" strokeWidth="2" />
          </svg>
        </button>
        <button type="button" aria-label="消息" className={clsx(tool, 'border-[#a8cbe8]')}>
          <svg width="12" height="10" viewBox="0 0 12 10">
            <path d="M2 1h8l2 1.500v4L10 8v2L8 8H2L0 6.500v-4z" fill="#222" />
            <path d="M3 3v3M5.500 3v3M8 3v3" stroke="#58b81c" strokeWidth="1.300" />
          </svg>
        </button>
      </div>
    </footer>
  );
}

export default function App() {
  return (
    <div className="flex h-screen flex-col overflow-hidden bg-white font-['DejaVu_Sans','Noto_Sans_CJK_SC',sans-serif]">
      <TopNav />
      <Header />
      <main className="flex min-h-0 flex-1">
        <Sidebar />
        <Splitter />
        <WorkPane />
      </main>
      <div className="flex h-[6px] shrink-0 justify-center border-b-2 border-white bg-[#b4b4b4]">
        <button type="button" aria-label="收起" className="h-1 w-10 bg-[#5b9bd5]" />
      </div>
      <SurveyPane />
      <TaskBar />
    </div>
  );
}
